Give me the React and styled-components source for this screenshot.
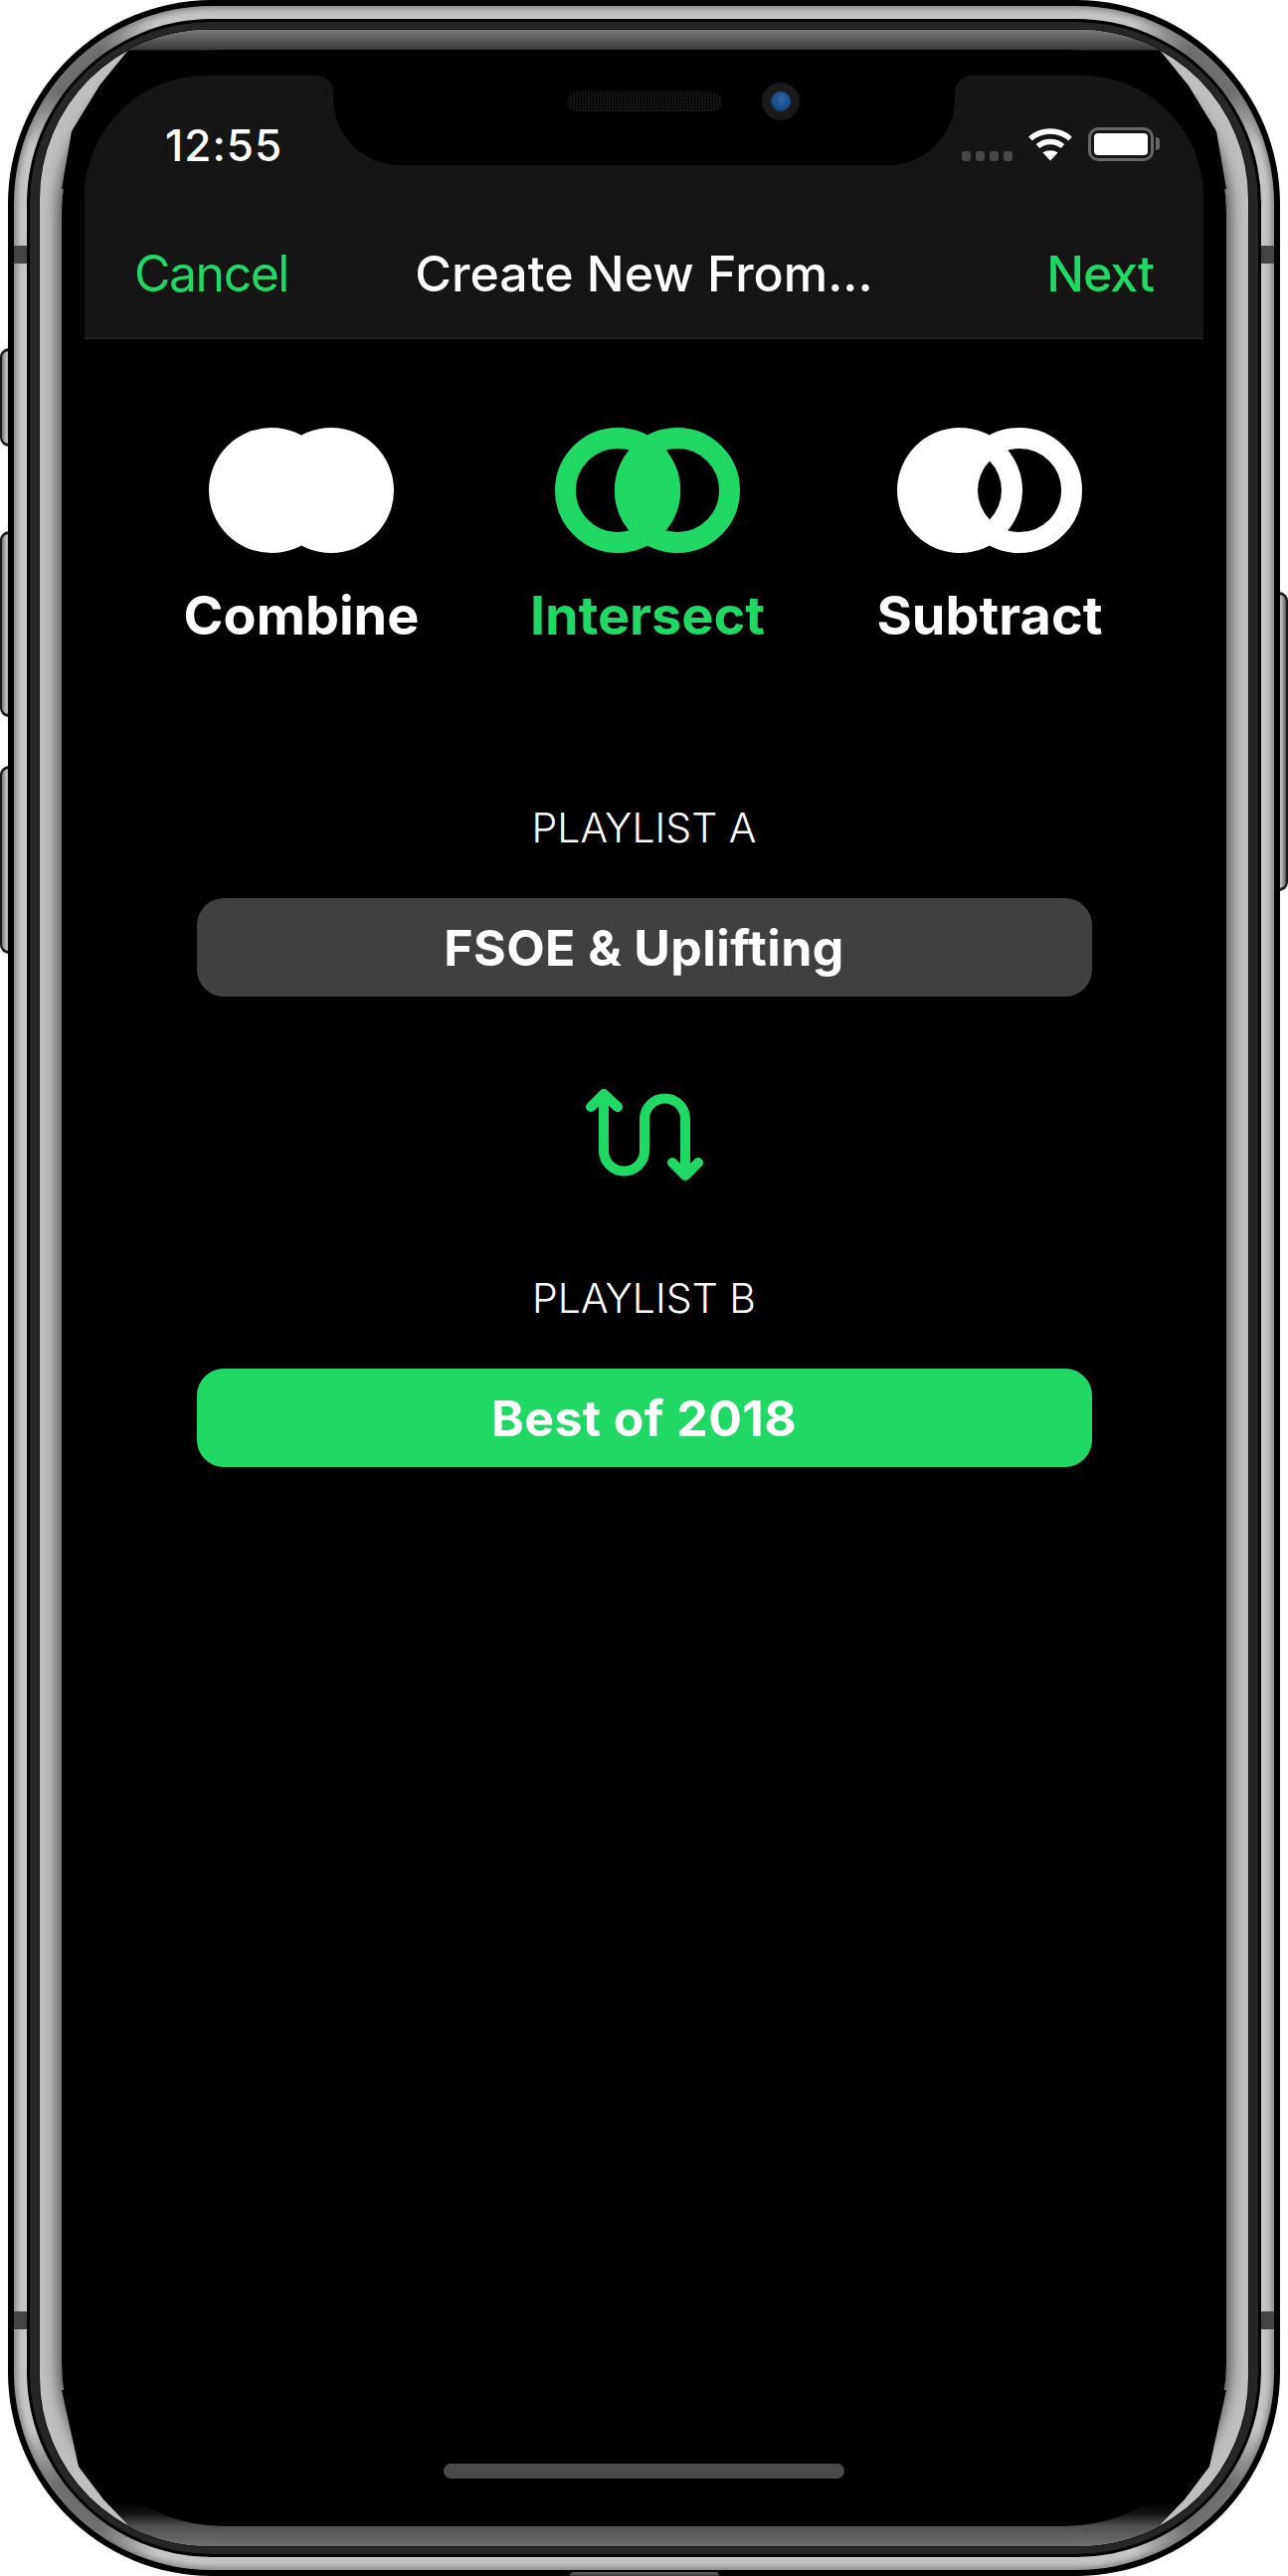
import React from "react";
import styled, { createGlobalStyle } from "styled-components";

const GREEN = "#20d964";

const Global = createGlobalStyle`
  html, body { margin: 0; padding: 0; background: #fff; }
  body { font-family: Inter, "Noto Sans", sans-serif; -webkit-font-smoothing: antialiased; }
`;

const Page = styled.div`
  position: relative;
  width: 1295px;
  height: 2590px;
  overflow: hidden;
  background: #fff;
  display: flex;
  justify-content: center;
`;

const SideButton = styled.div`
  position: absolute;
  top: ${(p) => p.$top}px;
  height: ${(p) => p.$h}px;
  width: 12px;
  box-sizing: border-box;
  ${(p) => (p.$right ? "right: 0; border-radius: 0 9px 9px 0; border-width: 3px 2px 3px 0;" : "left: 0; border-radius: 9px 0 0 9px; border-width: 3px 0 3px 2px;")}
  border-style: solid;
  border-color: #1a1a1a;
  background: linear-gradient(90deg, #777, #c4c4c4 45%, #999 70%, #555);
`;

const Device = styled.div`
  position: relative;
  width: 1279px;
  height: 2590px;
  box-sizing: border-box;
  padding: 6px;
  background: #000;
  border-radius: 205px;
`;

const BottomBump = styled.div`
  position: absolute;
  left: 565px;
  bottom: 0;
  width: 150px;
  height: 4px;
  border-radius: 8px 8px 0 0;
  background: linear-gradient(#666, #3a3a3a);
`;

const OuterRim = styled.div`
  position: relative;
  height: 100%;
  box-sizing: border-box;
  padding: 13px;
  background:
    radial-gradient(circle at 62px 62px, #6e6e6e 0, #6e6e6e 30px, transparent 90px),
    radial-gradient(circle at calc(100% - 62px) 62px, #6e6e6e 0, #6e6e6e 30px, transparent 90px),
    radial-gradient(circle at 62px calc(100% - 62px), #6e6e6e 0, #6e6e6e 30px, transparent 90px),
    radial-gradient(circle at calc(100% - 62px) calc(100% - 62px), #6e6e6e 0, #6e6e6e 30px, transparent 90px),
    #c6c6c6;
  border-radius: 199px;
  box-shadow: inset 0 0 7px 2px #777;
`;

const AntennaBand = styled.div`
  position: absolute;
  width: 13px;
  height: 18px;
  top: ${(p) => p.$top}px;
  ${(p) => (p.$right ? "right: 0;" : "left: 0;")}
  background: #444;
`;

const BlackGap = styled.div`
  height: 100%;
  box-sizing: border-box;
  padding: 3px;
  background: #000;
  border-radius: 186px;
`;

const DarkRing = styled.div`
  height: 100%;
  box-sizing: border-box;
  padding: 8px 10px 8px;
  background: #262626;
  border-radius: 183px;
`;

const Bezel = styled.div`
  position: relative;
  height: 100%;
  box-sizing: border-box;
  padding: 20px 22px;
  background: #bfbfbf;
  border-radius: 170px;
  box-shadow: 0 0 0 1px #141414;
  overflow: hidden;

  &::before {
    content: "";
    position: absolute;
    inset: 20px 22px;
    border-radius: 165px;
    box-shadow: 0 0 13px 5px #5c5c5c;
  }
`;

const BezelCap = styled.div`
  position: absolute;
  left: 0;
  right: 0;
  height: 180px;
  ${(p) =>
    p.$bottom
      ? `bottom: 0;
         background: linear-gradient(0deg, #6f6f6f 0, #505050 20px, #151515 32px, #000 45px);
         clip-path: polygon(70px 100%, calc(100% - 70px) 100%, calc(100% - 88px) calc(100% - 22px), calc(100% - 64px) calc(100% - 47px), calc(100% - 39px) calc(100% - 80px), calc(100% - 22px) calc(100% - 157px), 22px calc(100% - 157px), 39px calc(100% - 80px), 64px calc(100% - 47px), 88px calc(100% - 22px));`
      : `top: 0;
         background: linear-gradient(180deg, #7b7b7b 0, #3a3a3a 20px, #000 21px);
         clip-path: polygon(70px 0, calc(100% - 70px) 0, calc(100% - 90px) 19px, calc(100% - 60px) 56px, calc(100% - 32px) 102px, calc(100% - 22px) 160px, 22px 160px, 32px 102px, 60px 56px, 90px 19px);`}
`;

const Screen = styled.div`
  position: relative;
  height: 100%;
  background: #000;
  border-radius: 163px;
  overflow: hidden;
  display: flex;
  flex-direction: column;
  color: #fff;
`;

const Notch = styled.div`
  position: absolute;
  top: 0;
  left: 273px;
  width: 625px;
  height: 116px;
  box-sizing: border-box;
  padding: 33px 0 0 235px;
  display: flex;
  align-items: flex-start;
  gap: 40px;
  background: #000;
  border-radius: 0 0 67px 67px;

  &::before, &::after {
    content: "";
    position: absolute;
    top: 26px;
    width: 16px;
    height: 16px;
  }
  &::before {
    left: -16px;
    background: radial-gradient(circle at 0 100%, transparent 15.5px, #000 16px);
  }
  &::after {
    right: -16px;
    background: radial-gradient(circle at 100% 100%, transparent 15.5px, #000 16px);
  }
`;

const Speaker = styled.div`
  width: 156px;
  height: 20px;
  margin-top: 9px;
  border-radius: 10px;
  background:
    repeating-linear-gradient(90deg, transparent 0 2px, #000 2px 3px),
    repeating-linear-gradient(0deg, #161616 0 2px, #0c0c0c 2px 3px);
  box-shadow: inset 0 -2px 0 #151515;
`;

const Camera = styled.div`
  width: 38px;
  height: 38px;
  border-radius: 50%;
  background: #1a1a1a;
  display: flex;
  align-items: center;
  justify-content: center;
`;

const Lens = styled.div`
  width: 20px;
  height: 20px;
  border-radius: 50%;
  background: radial-gradient(circle at 55% 40%, #2a68ad, #174a85 60%, #0a2a50);
`;

const Header = styled.header`
  margin: 26px 23px 0;
  height: 265px;
  box-sizing: border-box;
  flex: none;
  background: #151515;
  border-top-left-radius: 122px;
  border-top-right-radius: 122px;
  border-bottom: 1px solid #2b2b2b;
`;

const StatusBar = styled.div`
  height: 86px;
  padding: 0 50px 0 81px;
  box-sizing: border-box;
  display: flex;
  justify-content: space-between;
  align-items: flex-end;
`;

const Time = styled.span`
  font-size: 44px;
  font-weight: 500;
  line-height: 32px;
  letter-spacing: 1px;
`;

const StatusIcons = styled.div`
  display: flex;
  align-items: flex-end;
  gap: 15px;
`;

const SignalDots = styled.div`
  display: flex;
  gap: 4.5px;
`;

const SignalDot = styled.i`
  display: block;
  width: 9.5px;
  height: 10px;
  border-radius: 3px;
  background: #484848;
`;

const Battery = styled.div`
  position: relative;
  width: 66px;
  height: 34px;
  box-sizing: border-box;
  border: 3px solid #666;
  border-radius: 10px;
  padding: 3px;

  &::after {
    content: "";
    position: absolute;
    right: -9px;
    top: 7px;
    width: 4px;
    height: 13px;
    border-radius: 0 4px 4px 0;
    background: #666;
  }
`;

const BatteryFill = styled.div`
  height: 100%;
  border-radius: 4px;
  background: #fff;
`;

const NavBar = styled.nav`
  height: 138px;
  padding: 0 50px;
  display: grid;
  grid-template-columns: 1fr auto 1fr;
  align-items: end;
`;

const NavAction = styled.span`
  font-size: 50px;
  line-height: 50px;
  color: ${GREEN};
  font-weight: ${(p) => (p.$strong ? 500 : 400)};
  letter-spacing: ${(p) => (p.$strong ? "-1px" : "-1.5px")};
  justify-self: ${(p) => (p.$strong ? "end" : "start")};
`;

const NavTitle = styled.span`
  font-size: 50px;
  line-height: 50px;
  font-weight: 500;
  letter-spacing: 0;
  color: #fff;
`;

const Main = styled.main`
  display: flex;
  flex-direction: column;
  align-items: center;
`;

const Modes = styled.div`
  align-self: flex-start;
  margin: 89px 0 0 67px;
  display: grid;
  grid-template-columns: 348px 348px 340px;
`;

const Mode = styled.div`
  display: flex;
  flex-direction: column;
  align-items: center;
  color: ${(p) => (p.$active ? GREEN : "#fff")};
`;

const ModeLabel = styled.span`
  margin-top: 33px;
  font-size: 54px;
  line-height: 60px;
  font-weight: 700;
  letter-spacing: 0;
`;

const SectionLabel = styled.div`
  margin-top: ${(p) => p.$mt}px;
  font-size: 41px;
  line-height: 50px;
  font-weight: 300;
  color: #fff;
`;

const PlaylistButton = styled.div`
  margin-top: 46px;
  width: 900px;
  height: 99px;
  border-radius: 27px;
  display: flex;
  align-items: center;
  justify-content: center;
  font-size: 50px;
  font-weight: 700;
  letter-spacing: 0.4px;
  background: ${(p) => (p.$active ? GREEN : "#404040")};
`;

const SwapIcon = styled.svg`
  display: block;
  margin-top: 93px;
`;

const HomeIndicator = styled.div`
  position: absolute;
  left: 384px;
  bottom: 48px;
  width: 403px;
  height: 15px;
  border-radius: 8px;
  background: #4a4a4a;
`;

function lens(cx, r) {
  const h = Math.sqrt(r * r - 30 * 30);
  return `M${cx} ${63 - h}A${r} ${r} 0 0 1 ${cx} ${63 + h}A${r} ${r} 0 0 1 ${cx} ${63 - h}Z`;
}

function VennIcon({ kind }) {
  return (
    <svg width="186" height="126" viewBox="0 0 186 126" fill="currentColor">
      {kind === "combine" && (
        <>
          <circle cx="63" cy="63" r="63" />
          <circle cx="123" cy="63" r="63" />
        </>
      )}
      {kind === "intersect" && (
        <>
          <circle cx="63" cy="63" r="52.5" fill="none" stroke="currentColor" strokeWidth="21" />
          <circle cx="123" cy="63" r="52.5" fill="none" stroke="currentColor" strokeWidth="21" />
          <path d={lens(93, 63)} />
        </>
      )}
      {kind === "subtract" && (
        <>
          <circle cx="63" cy="63" r="63" />
          <circle cx="123" cy="63" r="52.5" fill="none" stroke="currentColor" strokeWidth="21" />
          <path d={lens(93, 42)} fill="#000" />
        </>
      )}
    </svg>
  );
}

function Wifi() {
  return (
    <svg width="46" height="34" viewBox="0 0 46 34" fill="none" stroke="#fff">
      <path d="M3 11.5C14 1.5 32 1.5 43 11.5" strokeWidth="5.5" />
      <path d="M10.5 19C17.5 13 28.500 13 35.500 19" strokeWidth="5.5" />
      <path d="M23 33.500L15.500 25.500C19.500 22.500 26.500 22.500 30.500 25.500Z" fill="#fff" stroke="none" />
    </svg>
  );
}

function Swap() {
  return (
    <SwapIcon width="118" height="92" viewBox="0 0 118 92" fill="none" stroke={GREEN} strokeWidth="10" strokeLinecap="round" strokeLinejoin="round">
      <path d="M18 5V62A20.500 20.500 0 0 0 59 62V30A20.500 20.500 0 0 1 100 30V86" />
      <path d="M5 18L18 5L32 18" />
      <path d="M87 74L100 87L113 74" />
    </SwapIcon>
  );
}

const modes = [
  { kind: "combine", label: "Combine" },
  { kind: "intersect", label: "Intersect", active: true },
  { kind: "subtract", label: "Subtract" },
];

export default function App() {
  return (
    <Page>
      <Global />
      <SideButton $top={350} $h={99} />
      <SideButton $top={534} $h={187} />
      <SideButton $top={770} $h={189} />
      <SideButton $right $top={595} $h={301} />
      <Device>
        <OuterRim>
          <AntennaBand $top={241} />
          <AntennaBand $top={241} $right />
          <AntennaBand $top={2318} />
          <AntennaBand $top={2318} $right />
          <BlackGap>
            <DarkRing>
              <Bezel>
                <BezelCap />
                <BezelCap $bottom />
                <Screen>
                  <Header>
                    <StatusBar>
                      <Time>12:55</Time>
                      <StatusIcons>
                        <SignalDots>
                          <SignalDot />
                          <SignalDot />
                          <SignalDot />
                          <SignalDot />
                        </SignalDots>
                        <Wifi />
                        <Battery>
                          <BatteryFill />
                        </Battery>
                      </StatusIcons>
                    </StatusBar>
                    <NavBar>
                      <NavAction>Cancel</NavAction>
                      <NavTitle>Create New From...</NavTitle>
                      <NavAction $strong>Next</NavAction>
                    </NavBar>
                  </Header>
                  <Notch>
                    <Speaker />
                    <Camera>
                      <Lens />
                    </Camera>
                  </Notch>
                  <Main>
                    <Modes>
                      {modes.map((m) => (
                        <Mode key={m.kind} $active={m.active}>
                          <VennIcon kind={m.kind} />
                          <ModeLabel>{m.label}</ModeLabel>
                        </Mode>
                      ))}
                    </Modes>
                    <SectionLabel $mt={158}>PLAYLIST A</SectionLabel>
                    <PlaylistButton>FSOE &amp; Uplifting</PlaylistButton>
                    <Swap />
                    <SectionLabel $mt={93}>PLAYLIST B</SectionLabel>
                    <PlaylistButton $active>Best of 2018</PlaylistButton>
                  </Main>
                  <HomeIndicator />
                </Screen>
              </Bezel>
            </DarkRing>
          </BlackGap>
        </OuterRim>
        <BottomBump />
      </Device>
    </Page>
  );
}
